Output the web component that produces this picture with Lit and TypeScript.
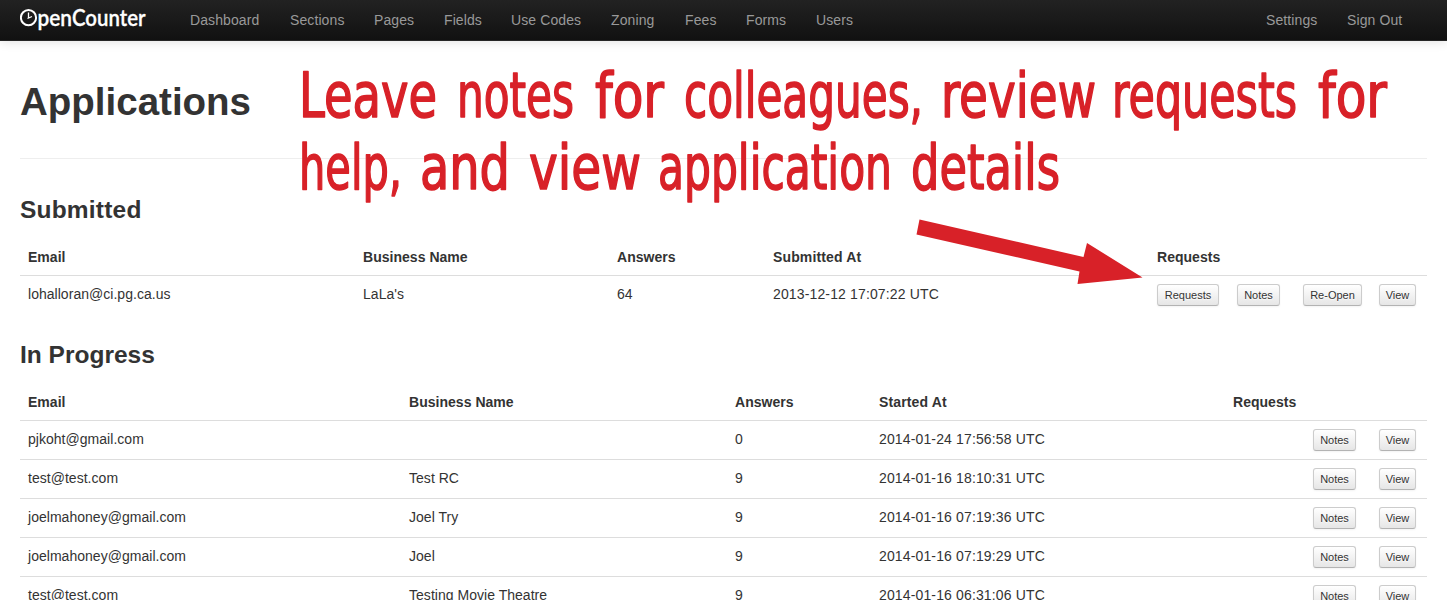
import { LitElement, html, svg, css } from "lit";
import { customElement } from "lit/decorators.js";

type Row = { cells: string[]; actions: string[] };

const NAV = ["Dashboard", "Sections", "Pages", "Fields", "Use Codes", "Zoning", "Fees", "Forms", "Users"];

const SUBMITTED: Row[] = [
  { cells: ["lohalloran@ci.pg.ca.us", "LaLa's", "64", "2013-12-12 17:07:22 UTC"], actions: ["Requests", "Notes", "Re-Open", "View"] },
];

const IN_PROGRESS: Row[] = [
  { cells: ["pjkoht@gmail.com", "", "0", "2014-01-24 17:56:58 UTC"], actions: ["", "Notes", "View"] },
  { cells: ["test@test.com", "Test RC", "9", "2014-01-16 18:10:31 UTC"], actions: ["", "Notes", "View"] },
  { cells: ["joelmahoney@gmail.com", "Joel Try", "9", "2014-01-16 07:19:36 UTC"], actions: ["", "Notes", "View"] },
  { cells: ["joelmahoney@gmail.com", "Joel", "9", "2014-01-16 07:19:29 UTC"], actions: ["", "Notes", "View"] },
  { cells: ["test@test.com", "Testing Movie Theatre", "9", "2014-01-16 06:31:06 UTC"], actions: ["", "Notes", "View"] },
];

// word, left edge, baseline, width
const NOTE: [string, number, number, number][] = [
  ["Leave", 299, 117, 138], ["notes", 457, 117, 117], ["for", 595, 117, 69],
  ["colleagues,", 684, 117, 239], ["review", 941, 117, 155], ["requests", 1112, 117, 185], ["for", 1318, 117, 69],
  ["help,", 299, 189, 103], ["and", 420, 189, 90], ["view", 529, 189, 112],
  ["application", 658, 189, 234], ["details", 911, 189, 149],
];

@customElement("app-root")
export class AppRoot extends LitElement {
  static styles = css`
    :host { display: block; position: relative; height: 600px; overflow: hidden; background: #fff;
      font: 14px/20px "Liberation Sans", Arial, sans-serif; color: #333; }
    .navbar { box-sizing: border-box; height: 41px; display: flex; padding: 0 20px; border-bottom: 1px solid #252525;
      background: linear-gradient(#222, #111); box-shadow: 0 1px 10px rgba(0, 0, 0, .12); color: #999; }
    .logo { width: 170px; height: 40px; flex: none; }
    .wordmark { font: 600 23px Lato, sans-serif; fill: #fff; stroke: #fff; stroke-width: .3; }
    .nav { display: grid; grid-template-columns: 100px 84px 70px 67px 100px 74px 61px 70px 60px; flex: 1; line-height: 40px; }
    .account { display: grid; grid-template-columns: 81px 80px; line-height: 40px; }
    .fit { letter-spacing: .1px; }
    .page { padding: 40px 20px 0; }
    .title { margin: 0 0 30px; height: 77px; border-bottom: 1px solid #eee; font-size: 38.5px; line-height: 41px; font-weight: 700; }
    .heading { margin: 0 0 10px; height: 40px; font-size: 24.5px; line-height: 41px; font-weight: 700; }
    .submitted-heading { letter-spacing: .2px; }
    .table { margin-bottom: 20px; }
    .row { display: grid; box-sizing: border-box; height: 39px; padding-top: 8px; border-top: 1px solid #ddd; }
    .head { height: 36px; border-top: 0; font-weight: 700; }
    .submitted .row { grid-template-columns: 335px 254px 156px 384px 80px 66px 76px 56px; }
    .progress .row { grid-template-columns: 381px 326px 144px 354px 80px 66px 56px; }
    .cell { padding: 0 8px; white-space: nowrap; letter-spacing: .03px; }
    .cell:nth-child(4) { letter-spacing: .14px; }
    .action { display: flex; align-items: flex-start; padding: 0 8px; }
    .btn { box-sizing: border-box; height: 22px; padding: 1px 0; border: 1px solid #ccc; border-bottom-color: #b3b3b3;
      border-radius: 3px; background: linear-gradient(#fff, #e6e6e6); font: 11px/18px "Liberation Sans", Arial, sans-serif;
      color: #333; white-space: nowrap; text-align: center; text-shadow: 0 1px 1px rgba(255, 255, 255, .75);
      box-shadow: inset 0 1px 0 rgba(255, 255, 255, .2), 0 1px 2px rgba(0, 0, 0, .05); }
    .Requests { width: 62px; }
    .Notes { width: 43px; }
    .ReOpen { width: 59px; }
    .View { width: 37px; }
    .overlay { position: absolute; left: 0; top: 0; width: 1447px; height: 600px; pointer-events: none; }
    .hand { font: 62px "DejaVu Sans Condensed", "DejaVu Sans", sans-serif; font-stretch: condensed;
      fill: #d82128; stroke: #d82128; stroke-width: 1.5; stroke-linejoin: round; }
  `;

  private table(kind: string, dateLabel: string, rows: Row[]) {
    return html`<div class="table ${kind}">
      <div class="row head">
        ${["Email", "Business Name", "Answers", dateLabel, "Requests"].map((t) => html`<div class="cell">${t}</div>`)}
      </div>
      ${rows.map((r) => html`<div class="row">
        ${r.cells.map((t) => html`<div class="cell">${t}</div>`)}
        ${r.actions.map((t) => html`<div class="action">${t ? html`<button class="btn ${t.replace("-", "")}">${t}</button>` : ""}</div>`)}
      </div>`)}
    </div>`;
  }

  render() {
    return html`
      <div class="navbar">
        <svg class="logo" viewBox="20 0 170 40">
          <circle cx="28.5" cy="17.700" r="7.600" fill="none" stroke="#fff" stroke-width="2" />
          <path d="M28.500 12.500V18.500M27.500 18.500L32 16.500" fill="none" stroke="#fff" stroke-width="1.300" />
          <text class="wordmark" x="37.500" y="26" textLength="34.500" lengthAdjust="spacingAndGlyphs">pen</text>
          <text class="wordmark" x="72" y="26" textLength="73.500" lengthAdjust="spacingAndGlyphs">Counter</text>
        </svg>
        <div class="nav fit">${NAV.map((t) => html`<div>${t}</div>`)}</div>
        <div class="account fit"><div>Settings</div><div>Sign Out</div></div>
      </div>
      <div class="page">
        <h1 class="title">Applications</h1>
        <h3 class="heading submitted-heading">Submitted</h3>
        ${this.table("submitted", "Submitted At", SUBMITTED)}
        <h3 class="heading">In Progress</h3>
        ${this.table("progress", "Started At", IN_PROGRESS)}
      </div>
      <svg class="overlay" viewBox="0 0 1447 600">
        ${NOTE.map(([t, x, y, w]) => svg`<text class="hand" x=${x} y=${y} textLength=${w} lengthAdjust="spacingAndGlyphs">${t}</text>`)}
        <path d="M919.500 219.500L1083.500 257L1087 243L1142.500 277.500L1077.500 284L1079.500 271.500L916.500 234.500Z" fill="#d82128" />
      </svg>`;
  }
}
